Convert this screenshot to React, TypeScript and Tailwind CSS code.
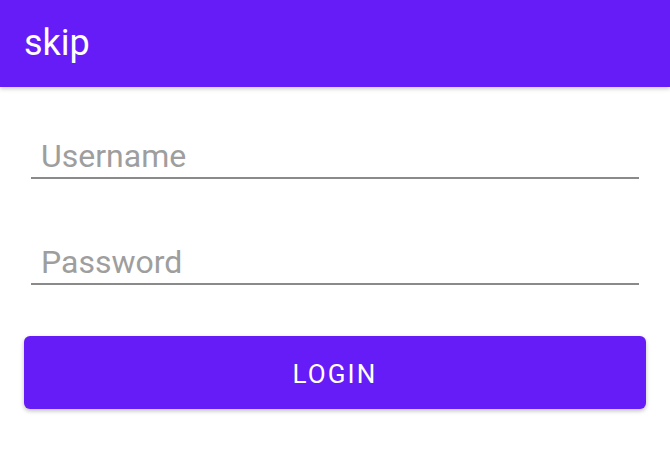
export default function App() {
  return (
    <div className="h-[466px] w-[670px] bg-white font-['Roboto',sans-serif]">
      <header className="flex h-[87px] items-center bg-[#661cf6] px-6 pb-[2px] shadow-[0_2px_4px_rgba(0,0,0,0.2)]">
        <h1 className="text-[36px] leading-none text-white">skip</h1>
      </header>

      <form className="flex flex-col px-6 pt-[49px]" onSubmit={(e) => e.preventDefault()}>
        <div className="mx-[7px] border-b-2 border-[#8a8a8a] pb-[1px]">
          <input
            placeholder="Username"
            className="h-[40px] w-full bg-transparent px-[10px] text-[32px] text-[#333] outline-none placeholder:text-[#9e9e9e]"
          />
        </div>
        <div className="mx-[7px] mt-[63px] border-b-2 border-[#8a8a8a] pb-[1px]">
          <input
            type="password"
            placeholder="Password"
            className="h-[40px] w-full bg-transparent px-[10px] text-[32px] text-[#333] outline-none placeholder:text-[#9e9e9e]"
          />
        </div>
        <button
          type="submit"
          className="mt-[51px] h-[73px] w-full rounded-[6px] bg-[#661cf6] pt-[4px] text-[26px] tracking-[0.08em] text-white shadow-[0_2px_4px_rgba(0,0,0,0.25)]"
        >
          LOGIN
        </button>
      </form>
    </div>
  );
}
